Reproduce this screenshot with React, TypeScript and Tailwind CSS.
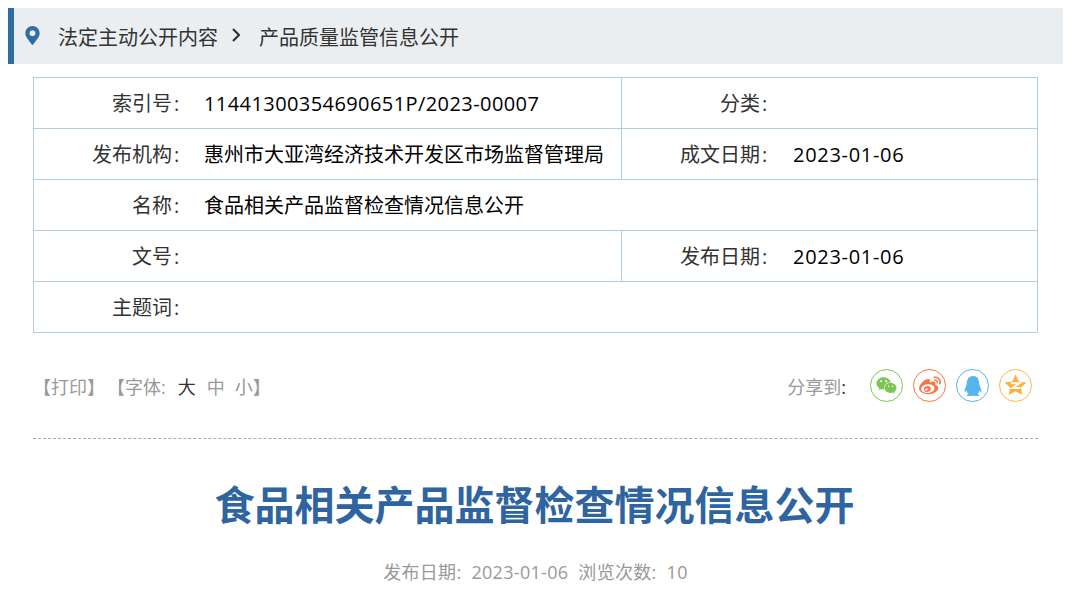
import { FaMapMarkerAlt, FaWeixin, FaWeibo, FaQq } from "react-icons/fa";

const L = ({ children, divider }: { children?: React.ReactNode; divider?: boolean }) => (
  <td className={divider ? "border-y border-l border-[#b5cde0] pr-[11px] pt-[2px] text-right text-[#333]" : "border-y border-[#b5cde0] pr-[10px] pt-[2px] text-right text-[#333]"}>
    {children}
    <span className={divider ? "ml-[2px] inline-block w-[8px] text-left" : "ml-[2px] inline-block w-[8px] text-left"}>:</span>
  </td>
);
const V = ({ children, span }: { children?: React.ReactNode; span?: number }) => (
  <td colSpan={span} className="border-y border-[#b5cde0] pl-[12px] pt-[2px] tracking-[0.42px] text-black">{children}</td>
);
const D = ({ children }: { children?: React.ReactNode }) => (
  <td className="border-y border-[#b5cde0] pl-[12px] pt-[2px] tracking-[0.7px] text-black">{children}</td>
);

function Share({ color, children }: { color: string; children: React.ReactNode }) {
  return (
    <span className="flex h-[33px] w-[33px] items-center justify-center rounded-full border" style={{ borderColor: color, color }}>
      {children}
    </span>
  );
}

export default function App() {
  return (
    <div className="h-[589px] overflow-hidden bg-white pl-[8px] pr-[11px] pt-[8px] font-['Open_Sans','Noto_Sans_CJK_SC',sans-serif] text-[20px]">
      <div className="flex h-[56px] items-center border-l-[6px] border-[#2f6ea5] bg-[#ebeef1] pl-[11px] text-[#333]">
        <FaMapMarkerAlt className="h-[19px] w-[15px] -translate-y-[1px] text-[#2f6ea5]" />
        <span className="ml-[18px] translate-y-[2px]">法定主动公开内容</span>
        <svg viewBox="0 0 8 14" className="ml-[14px] h-[14px] w-[8px] -translate-y-[1px]">
          <path d="M1 1l6 6-6 6" fill="none" stroke="#333" strokeWidth="2.2" />
        </svg>
        <span className="ml-[19px] translate-y-[2px]">产品质量监管信息公开</span>
      </div>

      <div className="mx-[25px] mt-[13px]">
        <table className="w-[1005px] table-fixed border-separate border-spacing-0 border-x border-[#b5cde0] leading-[24px] [&_tr+tr_td]:border-t-0">
          <colgroup>
            <col className="w-[158px]" />
            <col className="w-[429px]" />
            <col className="w-[160px]" />
            <col />
          </colgroup>
          <tbody>
            <tr className="h-[52px]"><L>索引号</L><V>11441300354690651P/2023-00007</V><L divider>分类</L><V /></tr>
            <tr className="h-[51px]"><L>发布机构</L><td className="border-y border-[#b5cde0] pl-[12px] pt-[2px] text-black">惠州市大亚湾经济技术开发区市场监督管理局</td><L divider>成文日期</L><D>2023-01-06</D></tr>
            <tr className="h-[51px]"><L>名称</L><td colSpan={3} className="border-y border-[#b5cde0] pl-[12px] pt-[2px] text-black">食品相关产品监督检查情况信息公开</td></tr>
            <tr className="h-[51px]"><L>文号</L><V /><L divider>发布日期</L><D>2023-01-06</D></tr>
            <tr className="h-[51px]"><L>主题词</L><V span={3} /></tr>
          </tbody>
        </table>

        <div className="mt-[36px] flex h-[33px] items-center justify-between text-[18px] text-[#999]">
          <div className="flex translate-y-[2px] items-center">
            <span>【打印】</span>
            <span className="ml-[2px]">【字体:</span>
            <span className="ml-[12px] text-[#333]">大</span>
            <span className="ml-[11px]">中</span>
            <span className="ml-[10px]">小</span>
            <span>】</span>
          </div>
          <div className="flex items-center pr-[6px]">
            <span className="translate-y-[2px]">分享到<span className="text-[#333]">:</span></span>
            <div className="ml-[24px] flex gap-[10px]">
              <Share color="#7dc653"><FaWeixin className="h-[21px] w-[21px]" /></Share>
              <Share color="#fa7444"><FaWeibo className="h-[22px] w-[22px]" /></Share>
              <Share color="#55b6ea"><FaQq className="h-[20px] w-[20px]" /></Share>
              <Share color="#fdba3f">
                <svg viewBox="0 0 24 24" className="h-[25px] w-[25px]">
                  <path fill="#fdb13a" d="M12 1.5l3.1 6.6 7.4.9-5.4 4.9 1.5 7.3-6.6-3.7-6.6 3.7 1.5-7.3L1.5 9l7.4-.9z" />
                  <path fill="none" stroke="#fff" strokeWidth="1.8" d="M7.5 9.8h8.5l-7 4.6h7.5" />
                </svg>
              </Share>
            </div>
          </div>
        </div>

        <div className="mt-[36px] border-t border-dashed border-[#aaa]" />

        <h1 className="mt-[35px] -translate-x-[1px] text-center font-['Noto_Sans_CJK_SC'] text-[40px] font-bold leading-[58px] text-[#2e64a0]">食品相关产品监督检查情况信息公开</h1>
        <div className="mt-[27px] flex justify-center text-[18px] leading-[26px] tracking-[0.3px] text-[#999]">
          <span>发布日期:</span>
          <span className="ml-[10px]">2023-01-06</span>
          <span className="ml-[10px]">浏览次数:</span>
          <span className="ml-[10px]">10</span>
        </div>
      </div>
    </div>
  );
}
